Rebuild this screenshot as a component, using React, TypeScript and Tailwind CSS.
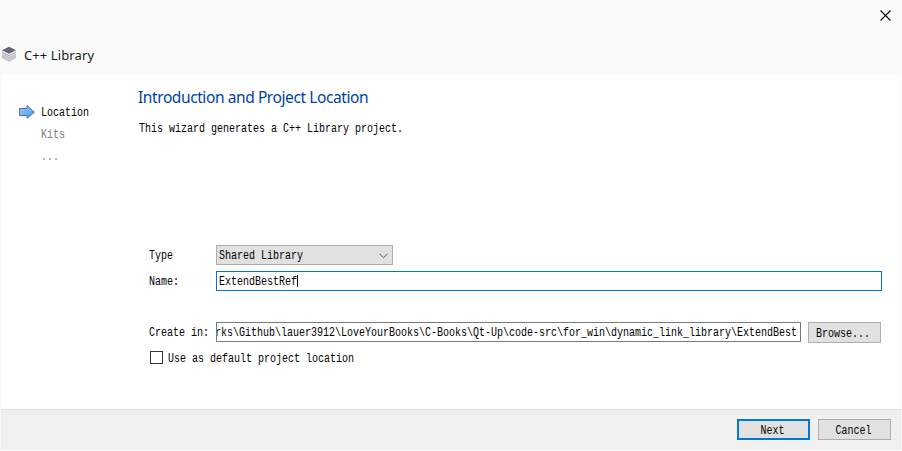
import type { ReactNode } from "react";

function Mono({ children, className = "" }: { children: ReactNode; className?: string }) {
  return (
    <span
      className={`block h-3 origin-[0_9px] translate-y-px scale-y-[1.2] whitespace-pre font-['Liberation_Mono',monospace] text-[10px] leading-3 ${className}`}
    >
      {children}
    </span>
  );
}

function LibraryIcon() {
  return (
    <svg width="16" height="16" viewBox="0 0 16 16" fill="none">
      <path d="M1 4.500 8 8l7-3.500v7L8 15 1 11.500z" fill="#e3e5e9" />
      <path d="m1 6.200 7 3.500 7-3.500M1 8l7 3.500L15 8M1 9.800l7 3.500 7-3.500M1 11.500 8 15l7-3.500" stroke="#a3a6af" strokeWidth=".8" />
      <path d="m8 .800 7 3.500-7 3.500-7-3.500z" fill="#636777" />
    </svg>
  );
}

function ArrowIcon() {
  return (
    <svg width="18" height="16" viewBox="0 0 18 16">
      <defs>
        <linearGradient id="arrow" x1="0" y1="0" x2="1" y2="1">
          <stop offset="0" stopColor="#9fcbfa" />
          <stop offset="1" stopColor="#4d94e8" />
        </linearGradient>
      </defs>
      <path d="M2 5.200h7.500V2.200L17 9l-7 6v-2.500H2z" fill="#d3d3d3" />
      <path d="M1.500 4.500H9V1.500L16.200 8 9 14.200V11.500H1.500z" fill="url(#arrow)" stroke="#4d74a8" strokeWidth="1" />
    </svg>
  );
}

export default function App() {
  return (
    <div className="flex h-[451px] w-[902px] flex-col overflow-hidden bg-[#fafafa] text-black">
      <header className="h-[75px] shrink-0">
        <div className="flex h-[46px] justify-end pt-[10px] pr-[11px]">
          <svg width="11" height="11" viewBox="0 0 11 11" stroke="#000" strokeWidth="1.100">
            <path d="m.5.5 10 10m0-10-10 10" />
          </svg>
        </div>
        <div className="flex h-4 items-center gap-[7px] pl-[1px]">
          <LibraryIcon />
          <span className="pt-px font-['Noto_Sans',sans-serif] text-[13px] leading-4 tracking-[0.1px] text-[#1a1a1a]">C++ Library</span>
        </div>
      </header>

      <main className="mx-px flex h-[334px] shrink-0 bg-white">
        <nav className="w-[137px] pt-[29px] pl-[17px]">
          <div className="flex h-[22px] items-start gap-[5px]">
            <ArrowIcon />
            <Mono className="mt-[3px]">Location</Mono>
          </div>
          <Mono className="mt-[3px] ml-[23px] text-[#808080]">Kits</Mono>
          <Mono className="mt-[10px] ml-[23px] text-[#808080]">...</Mono>
        </nav>

        <section className="w-[745px] pt-[12px]">
          <h1 className="h-[22px] whitespace-nowrap font-['Noto_Sans',sans-serif] text-[15.5px] leading-[21px] tracking-[-0.41px] text-[#003fa6]">
            Introduction and Project Location
          </h1>
          <Mono className="mt-[14px] ml-px">This wizard generates a C++ Library project.</Mono>

          <div className="mt-[110px] ml-[11px] flex h-5">
            <Mono className="mt-[5px] w-[67px]">Type</Mono>
            <div className="flex h-5 w-[177px] items-start justify-between border border-[#adadad] bg-[#e1e1e1] pt-1 pr-[4px] pl-[2px]">
              <Mono>Shared Library</Mono>
              <svg className="mt-[3px]" width="9" height="6" viewBox="0 0 9 6" fill="none" stroke="#555">
                <path d="m.5.700 4 4 4-4" />
              </svg>
            </div>
          </div>
          <div className="mt-[6px] ml-[11px] flex h-5">
            <Mono className="mt-[5px] w-[67px]">Name:</Mono>
            <div className="flex h-5 w-[666px] border border-[#0078d7] bg-white pt-1 pl-[2px]">
              <Mono>ExtendBestRef</Mono>
              <span className="-mt-px h-3 w-px bg-black" />
            </div>
          </div>

          <div className="mt-[31px] ml-[11px] flex h-[21px]">
            <Mono className="mt-[5px] w-[67px]">Create in:</Mono>
            <div className="flex h-5 w-[585px] justify-end overflow-hidden border border-[#7a7a7a] bg-white pt-1 pr-[3px]">
              <Mono>rks\Github\lauer3912\LoveYourBooks\C-Books\Qt-Up\code-src\for_win\dynamic_link_library\ExtendBest</Mono>
            </div>
            <button className="ml-[7px] flex h-[21px] w-[73px] border border-[#adadad] bg-[#e1e1e1] pt-[5px] pl-[7px]">
              <Mono>Browse...</Mono>
            </button>
          </div>
          <div className="mt-2 ml-3 flex h-[13px] gap-[5px]">
            <span className="size-[13px] border border-[#333] bg-white" />
            <Mono className="mt-[2px]">Use as default project location</Mono>
          </div>
        </section>
      </main>

      <footer className="mx-px flex h-[41px] shrink-0 justify-end gap-2 border-t border-[#dfdfdf] bg-[#f0f0f0] pt-[9px] pr-[10px]">
        <button className="flex h-[21px] w-[73px] justify-center border-2 border-[#0078d7] bg-[#e1e1e1] pt-1 pr-[2px]">
          <Mono>Next</Mono>
        </button>
        <button className="flex h-[21px] w-[73px] justify-center border border-[#adadad] bg-[#e1e1e1] pt-[5px] pr-[2px]">
          <Mono>Cancel</Mono>
        </button>
      </footer>
    </div>
  );
}
